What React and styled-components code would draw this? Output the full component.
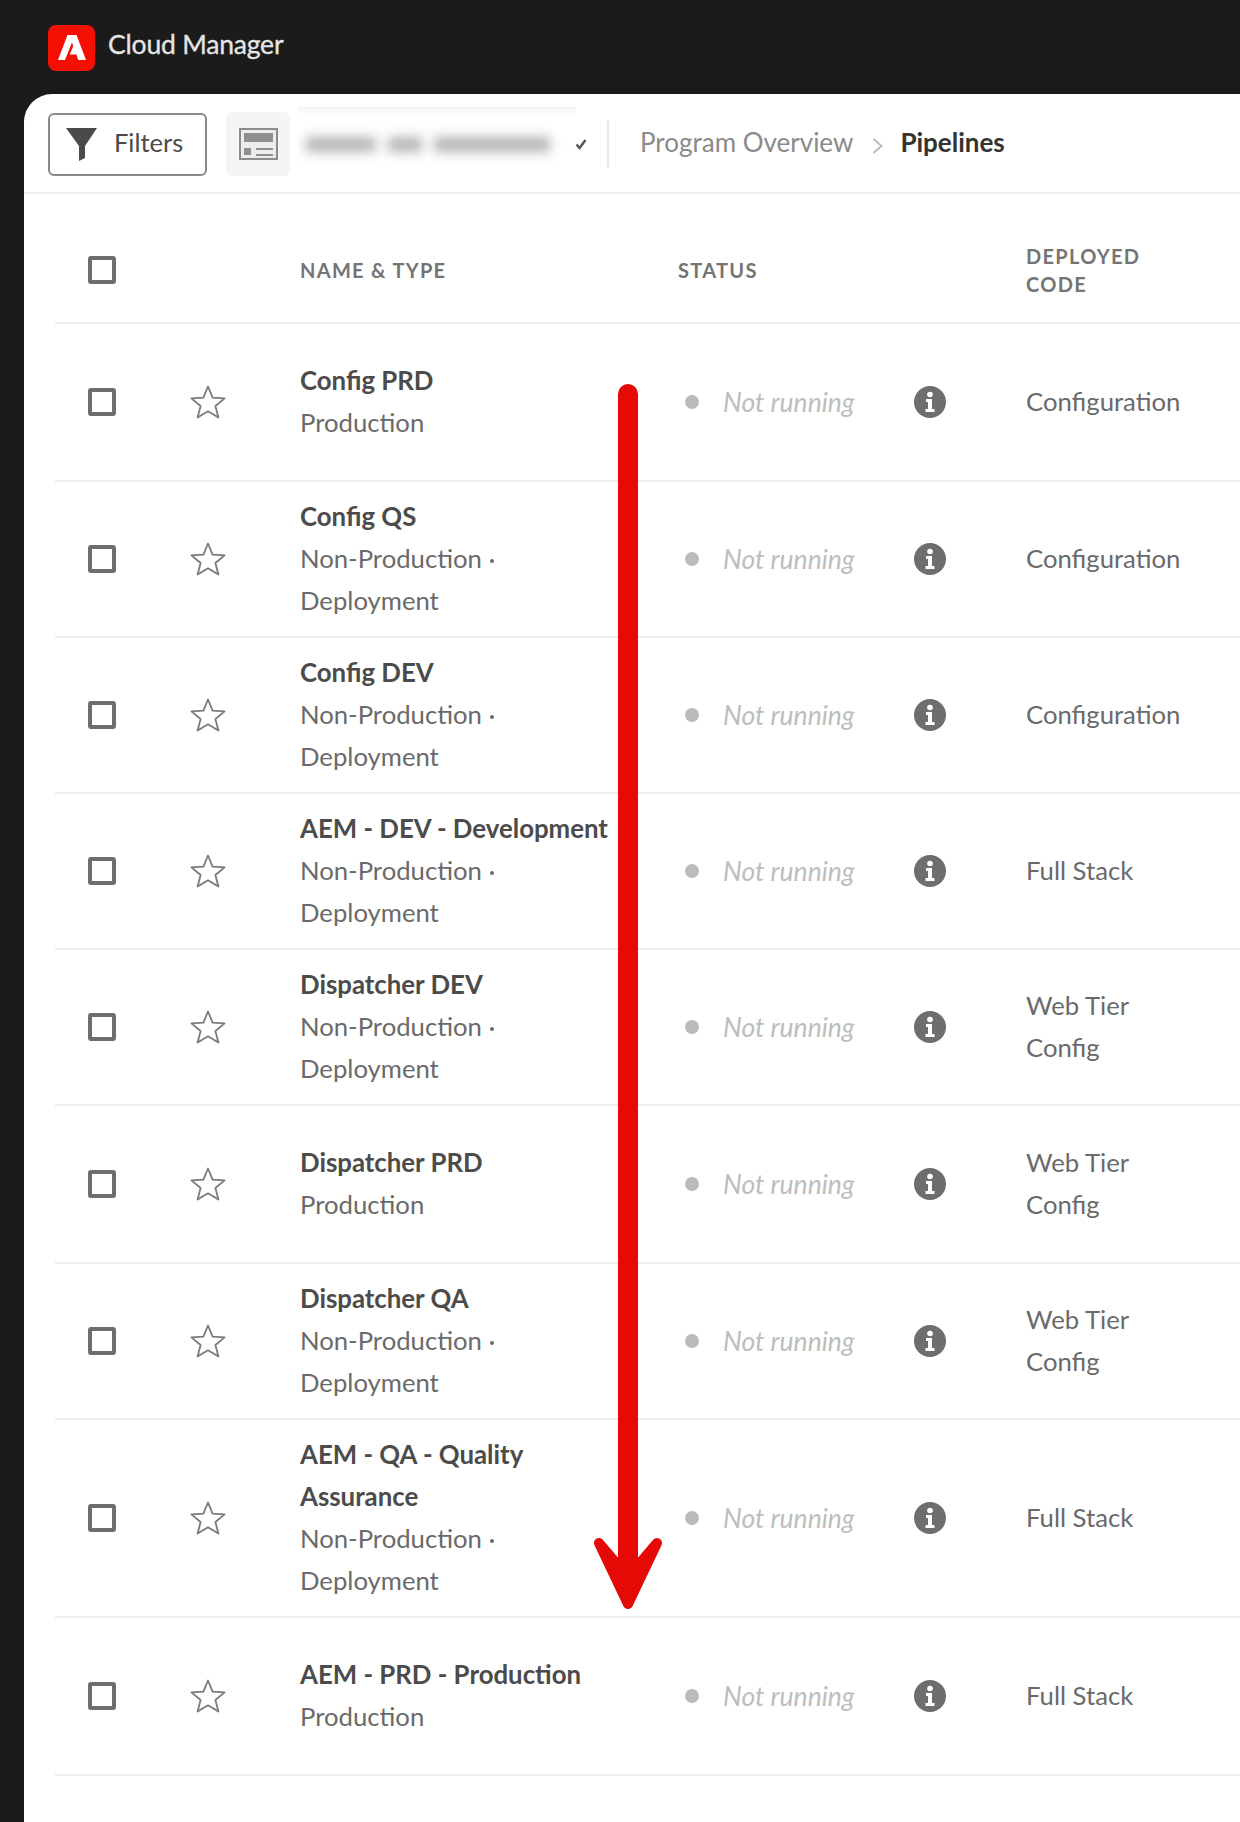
import React from "react"
import styled, { createGlobalStyle } from "styled-components"

const GlobalStyle = createGlobalStyle`
  * {
    box-sizing: border-box;
  }
  html,
  body {
    margin: 0;
    padding: 0;
    background: #1b1b1b;
    font-family: "Lato", "Liberation Sans", sans-serif;
    overflow: hidden;
  }
`

const NON_PROD = ["Non-Production", "Deployment"]

const pipelines = [
  { name: ["Config PRD"], sub: ["Production"], code: ["Configuration"] },
  { name: ["Config QS"], sub: NON_PROD, code: ["Configuration"] },
  { name: ["Config DEV"], sub: NON_PROD, code: ["Configuration"] },
  { name: ["AEM - DEV - Development"], sub: NON_PROD, code: ["Full Stack"] },
  { name: ["Dispatcher DEV"], sub: NON_PROD, code: ["Web Tier", "Config"] },
  { name: ["Dispatcher PRD"], sub: ["Production"], code: ["Web Tier", "Config"] },
  { name: ["Dispatcher QA"], sub: NON_PROD, code: ["Web Tier", "Config"] },
  { name: ["AEM - QA - Quality", "Assurance"], sub: NON_PROD, code: ["Full Stack"] },
  { name: ["AEM - PRD - Production"], sub: ["Production"], code: ["Full Stack"] },
]

const AdobeLogo = () => (
  <svg width="28" height="25" viewBox="0 0 28 25">
    <path fill="#fff" d="M9.5 0H18.5L28 25H20.3L18.4 19.5H11.8L15.2 11L14 7.5L7 25H0Z" />
  </svg>
)

const FunnelIcon = () => (
  <svg width="31" height="33" viewBox="0 0 31 33">
    <path fill="#4a4a4a" d="M0 0H31L19 18V30L13 33V18Z" />
  </svg>
)

const LayoutIcon = () => (
  <svg width="39" height="32" viewBox="0 0 39 32">
    <rect x="1" y="1" width="37" height="30" fill="#ececec" stroke="#8c8c8c" strokeWidth="2" />
    <rect x="5" y="5" width="29" height="9" fill="#8f8f8f" />
    <rect x="5" y="20" width="7" height="7" fill="#8f8f8f" />
    <rect x="17" y="20" width="17" height="2" fill="#8f8f8f" />
    <rect x="17" y="26" width="17" height="2" fill="#8f8f8f" />
  </svg>
)

const CheckIcon = () => (
  <svg width="12" height="12" viewBox="0 0 12 12">
    <path d="M1.5 6.5L4.5 10L10.5 2" fill="none" stroke="#555" strokeWidth="2.4" />
  </svg>
)

const ChevronIcon = () => (
  <svg width="11" height="16" viewBox="0 0 11 16">
    <path d="M1.5 1L9.5 8L1.5 15" fill="none" stroke="#bdbdbd" strokeWidth="2" />
  </svg>
)

const StarIcon = () => (
  <svg width="36" height="34" viewBox="0 0 36 34">
    <path
      d="M18 1.5L22.6 12.6L34.6 13.4L25.4 21L28.4 32.6L18 26.3L7.6 32.6L10.6 21L1.4 13.4L13.4 12.6Z"
      fill="none"
      stroke="#7a7a7a"
      strokeWidth="1.8"
      strokeLinejoin="round"
    />
  </svg>
)

const InfoIcon = () => (
  <svg width="32" height="32" viewBox="0 0 32 32">
    <circle cx="16" cy="16" r="16" fill="#6e6e6e" />
    <circle cx="16" cy="8.5" r="2.8" fill="#fff" />
    <path fill="#fff" d="M12 13H18V23H20.5V26H11.5V23H14V16H12Z" />
  </svg>
)

const App = () => {
  return (
    <Page>
      <GlobalStyle />
      <TopBar>
        <LogoTile>
          <AdobeLogo />
        </LogoTile>
        <AppName>Cloud Manager</AppName>
      </TopBar>
      <Panel>
        <Toolbar>
          <FilterButton>
            <FunnelIcon />
            <FilterLabel>Filters</FilterLabel>
          </FilterButton>
          <IconTile>
            <LayoutIcon />
          </IconTile>
          <ProgramPicker>
            <BlurredName>
              <BlurBar $width={70} />
              <BlurBar $width={34} />
              <BlurBar $width={116} />
            </BlurredName>
          </ProgramPicker>
          <CheckSlot>
            <CheckIcon />
          </CheckSlot>
          <Divider />
          <Crumb>Program Overview</Crumb>
          <ChevronSlot>
            <ChevronIcon />
          </ChevronSlot>
          <CurrentCrumb>Pipelines</CurrentCrumb>
        </Toolbar>
        <Table>
          <HeaderRow>
            <Checkbox />
            <span />
            <HeaderCell>Name &amp; Type</HeaderCell>
            <HeaderCell>Status</HeaderCell>
            <span />
            <HeaderCell>Deployed Code</HeaderCell>
          </HeaderRow>
          {pipelines.map((p) => (
            <Row key={p.name.join(" ")} $short={p.name.length + p.sub.length === 2}>
              <Checkbox />
              <StarSlot>
                <StarIcon />
              </StarSlot>
              <div>
                {p.name.map((line) => (
                  <NameLine key={line}>{line}</NameLine>
                ))}
                {p.sub.map((line, i) => (
                  <PlainLine key={line}>
                    {line}
                    {i === 0 && p.sub.length > 1 && <Bullet />}
                  </PlainLine>
                ))}
              </div>
              <Status>
                <Dot />
                <StatusText>Not running</StatusText>
              </Status>
              <InfoSlot>
                <InfoIcon />
              </InfoSlot>
              <div>
                {p.code.map((line) => (
                  <PlainLine key={line}>{line}</PlainLine>
                ))}
              </div>
            </Row>
          ))}
        </Table>
      </Panel>
      <Arrow viewBox="0 0 80 1240" width="80" height="1240">
        <path d="M38 14V1190" stroke="#e60a06" strokeWidth="20" strokeLinecap="round" fill="none" />
        <path
          d="M9 1163L38 1224L67 1163L38 1197Z"
          fill="#e60a06"
          stroke="#e60a06"
          strokeWidth="10"
          strokeLinejoin="round"
        />
      </Arrow>
    </Page>
  )
}

const Page = styled.div`
  position: relative;
  width: 1240px;
  height: 1822px;
  background: #1b1b1b;
  overflow: hidden;
`

const TopBar = styled.header`
  height: 94px;
  padding: 0 48px;
  display: flex;
  align-items: center;
  gap: 13px;
`

const LogoTile = styled.div`
  width: 47px;
  height: 46px;
  margin-top: 1px;
  background: #f40f02;
  border-radius: 8px;
  display: flex;
  align-items: center;
  justify-content: center;
`

const AppName = styled.span`
  margin-bottom: 6px;
  color: #e6e6e6;
  font-size: 26.5px;
  letter-spacing: -0.2px;
  -webkit-text-stroke: 0.3px #e6e6e6;
`

const Panel = styled.main`
  margin-left: 24px;
  height: 1728px;
  background: #fff;
  border-top-left-radius: 28px;
`

const Toolbar = styled.div`
  height: 100px;
  padding-left: 24px;
  padding-top: 2px;
  border-bottom: 2px solid #ececec;
  display: flex;
  align-items: center;
`

const FilterButton = styled.div`
  width: 159px;
  height: 63px;
  padding-left: 16px;
  border: 2px solid #8a8a8a;
  border-radius: 6px;
  display: flex;
  align-items: center;
  gap: 17px;
`

const FilterLabel = styled.span`
  margin-bottom: 4px;
  color: #4b4b4b;
  font-size: 25.5px;
`

const IconTile = styled.div`
  width: 64px;
  height: 64px;
  margin-left: 19px;
  background: #f5f5f5;
  border-radius: 6px;
  display: flex;
  align-items: center;
  justify-content: center;
`

const ProgramPicker = styled.div`
  width: 278px;
  height: 74px;
  margin-left: 8px;
  padding-left: 8px;
  display: flex;
  align-items: center;
  background: linear-gradient(#f3f3f3 0, #fff 8px, #fff 100%);
  overflow: hidden;
`

const BlurredName = styled.div`
  display: flex;
  gap: 12px;
  filter: blur(6px);
`

const BlurBar = styled.span`
  display: block;
  width: ${(p) => p.$width}px;
  height: 15px;
  background: #b4b4b4;
`

const CheckSlot = styled.div`
  width: 12px;
  margin-left: -1px;
  display: flex;
`

const Divider = styled.div`
  width: 2px;
  height: 48px;
  margin: 0 31px 0 20px;
  background: #e8e8e8;
`

const Crumb = styled.span`
  margin-bottom: 4px;
  color: #8a8a8a;
  font-size: 26px;
`

const ChevronSlot = styled.div`
  margin: 3px 17px 0 19px;
  display: flex;
`

const CurrentCrumb = styled.span`
  margin-bottom: 4px;
  color: #333;
  font-size: 26px;
  font-weight: 700;
`

const Table = styled.section`
  margin-left: 31px;
`

const columns = "102px 110px 378px 236px 112px 160px"

const HeaderRow = styled.div`
  height: 130px;
  padding: 24px 0 0 33px;
  border-bottom: 2px solid #ececec;
  display: grid;
  grid-template-columns: ${columns};
  align-items: center;
`

const HeaderCell = styled.span`
  color: #747474;
  font-size: 20px;
  font-weight: 700;
  line-height: 28px;
  letter-spacing: 1.3px;
  text-transform: uppercase;
`

const Row = styled.div`
  min-height: ${(p) => (p.$short ? "158px" : "auto")};
  padding: 14px 0 14px 33px;
  border-bottom: 2px solid #ececec;
  display: grid;
  grid-template-columns: ${columns};
  align-items: center;
`

const Checkbox = styled.span`
  display: block;
  width: 28px;
  height: 28px;
  border: 4px solid #6e6e6e;
  border-radius: 3px;
`

const StarSlot = styled.div`
  display: flex;
`

const NameLine = styled.div`
  height: 42px;
  color: #4b4b4b;
  font-size: 25.8px;
  font-weight: 700;
  line-height: 40px;
  white-space: nowrap;
`

const PlainLine = styled.div`
  height: 42px;
  color: #6a6a6a;
  font-size: 25.7px;
  line-height: 40px;
  white-space: nowrap;
`

const Bullet = styled.span`
  display: inline-block;
  width: 4px;
  height: 4px;
  margin-left: 8px;
  vertical-align: 5px;
  border-radius: 50%;
  background: #6a6a6a;
`

const Status = styled.div`
  padding-left: 7px;
  display: flex;
  align-items: center;
  gap: 24px;
`

const Dot = styled.span`
  width: 14px;
  height: 14px;
  border-radius: 50%;
  background: #bbbbbb;
`

const StatusText = styled.span`
  color: #bdbdbd;
  font-size: 26.5px;
  font-style: italic;
`

const InfoSlot = styled.div`
  display: flex;
`

const Arrow = styled.svg`
  position: absolute;
  left: 590px;
  top: 380px;
`

export default App
